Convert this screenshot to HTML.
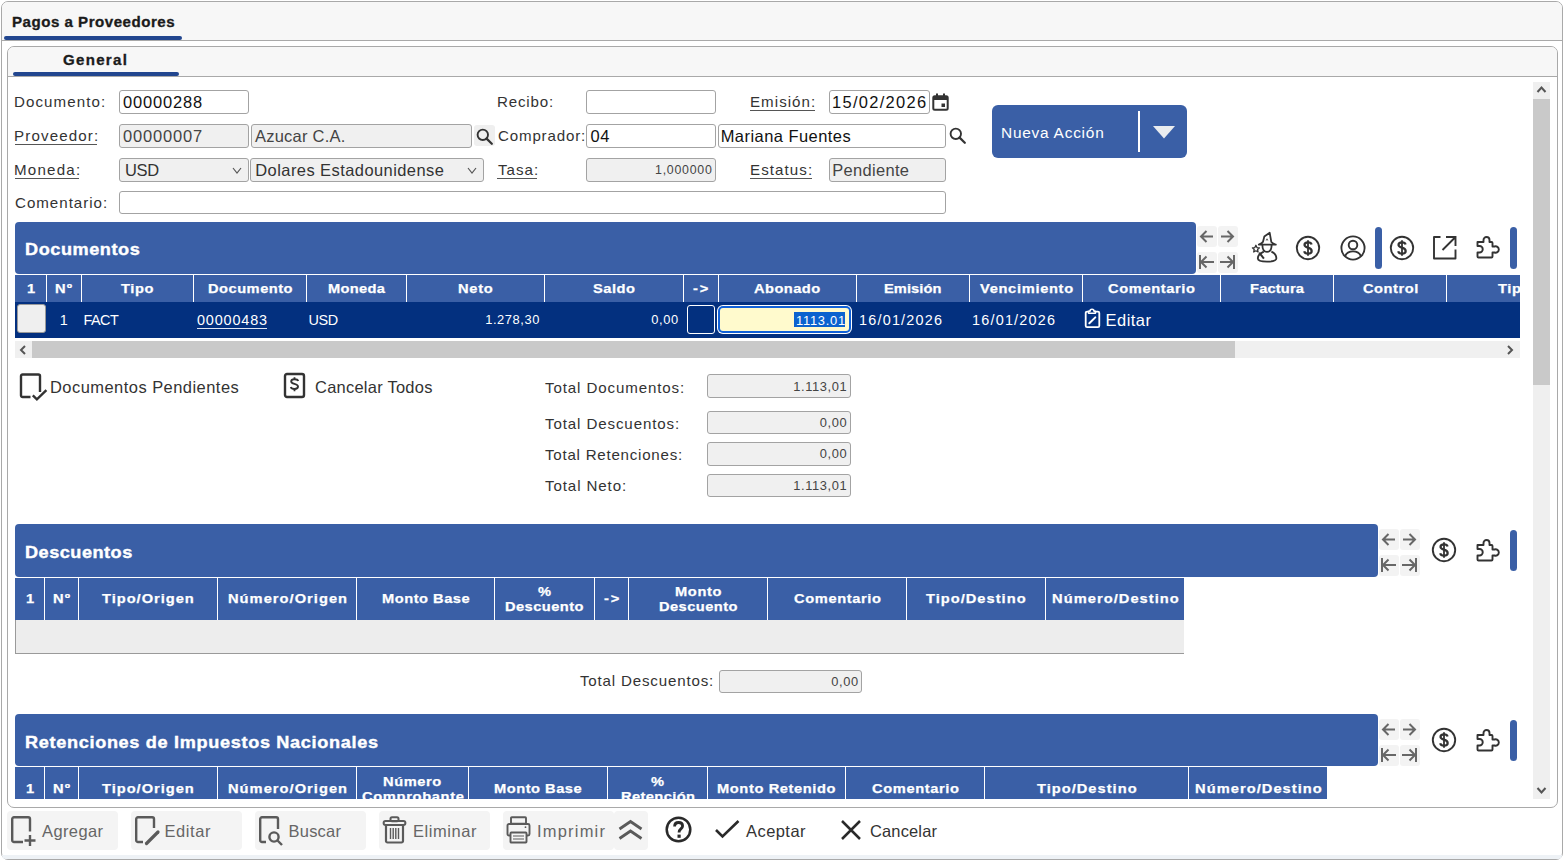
<!DOCTYPE html>
<html><head><meta charset="utf-8"><style>
html,body{margin:0;padding:0;}
body{width:1564px;height:861px;position:relative;overflow:hidden;background:#fff;font-family:"Liberation Sans",sans-serif;}
div,span,svg{box-sizing:border-box;}
</style></head><body>
<div style="position:absolute;left:1px;top:1px;width:1562px;height:859px;border:1px solid #a9a9a9;border-radius:7px;background:#fff;"></div>
<div style="position:absolute;left:2px;top:2px;width:1560px;height:38px;background:#f7f7f7;border-radius:6px 6px 0 0;"></div>
<div style="position:absolute;left:2px;top:40px;width:1560px;height:1px;background:#a9a9a9;"></div>
<div style="position:absolute;left:4px;top:36px;width:178px;height:4px;background:#22468f;border-radius:2px;"></div>
<span style="position:absolute;left:12.00px;top:16.00px;font-size:13.73px;line-height:1;font-weight:700;letter-spacing:0.460px;color:#1b1b1b;white-space:pre;transform:scaleX(1.1);transform-origin:0 0;-webkit-text-stroke:0.3px #1b1b1b;">Pagos a Proveedores</span>
<div style="position:absolute;left:2px;top:855px;width:1560px;height:4px;background:#eef2f6;border-radius:0 0 6px 6px;"></div>
<div style="position:absolute;left:7px;top:46px;width:1551px;height:762px;border:1px solid #a9a9a9;border-radius:7px;background:#fff;"></div>
<div style="position:absolute;left:8px;top:47px;width:1549px;height:29px;background:#f7f7f7;border-radius:6px 6px 0 0;"></div>
<div style="position:absolute;left:8px;top:76px;width:1549px;height:1px;background:#a9a9a9;"></div>
<div style="position:absolute;left:13px;top:72px;width:166px;height:4px;background:#22468f;border-radius:2px;"></div>
<span style="position:absolute;left:63.00px;top:54.00px;font-size:13.73px;line-height:1;font-weight:700;letter-spacing:1.166px;color:#1b1b1b;white-space:pre;transform:scaleX(1.1);transform-origin:0 0;-webkit-text-stroke:0.3px #1b1b1b;">General</span>
<span style="position:absolute;left:14.00px;top:94.00px;font-size:15.11px;line-height:1;letter-spacing:1.082px;color:#333;white-space:pre;">Documento:</span>
<span style="position:absolute;left:14.00px;top:128.00px;font-size:15.11px;line-height:1;letter-spacing:1.143px;color:#333;white-space:pre;">Proveedor:</span>
<div style="position:absolute;left:15px;top:144px;width:82px;height:1px;background:#555;"></div>
<span style="position:absolute;left:14.00px;top:162.00px;font-size:15.11px;line-height:1;letter-spacing:1.233px;color:#333;white-space:pre;">Moneda:</span>
<div style="position:absolute;left:15px;top:178px;width:64px;height:1px;background:#555;"></div>
<span style="position:absolute;left:15.00px;top:195.00px;font-size:15.11px;line-height:1;letter-spacing:0.990px;color:#333;white-space:pre;">Comentario:</span>
<span style="position:absolute;left:497.00px;top:94.00px;font-size:15.11px;line-height:1;letter-spacing:0.828px;color:#333;white-space:pre;">Recibo:</span>
<span style="position:absolute;left:498.00px;top:128.00px;font-size:15.11px;line-height:1;letter-spacing:0.825px;color:#333;white-space:pre;">Comprador:</span>
<span style="position:absolute;left:498.00px;top:162.00px;font-size:15.11px;line-height:1;letter-spacing:1.021px;color:#333;white-space:pre;">Tasa:</span>
<div style="position:absolute;left:497px;top:178px;width:40px;height:1px;background:#555;"></div>
<span style="position:absolute;left:750.00px;top:94.00px;font-size:15.11px;line-height:1;letter-spacing:1.037px;color:#333;white-space:pre;">Emisión:</span>
<div style="position:absolute;left:750px;top:110px;width:65px;height:1px;background:#555;"></div>
<span style="position:absolute;left:750.00px;top:162.00px;font-size:15.11px;line-height:1;letter-spacing:1.087px;color:#333;white-space:pre;">Estatus:</span>
<div style="position:absolute;left:750px;top:178px;width:62px;height:1px;background:#555;"></div>
<div style="position:absolute;left:119px;top:90px;width:130px;height:24px;border:1px solid #a3a3a3;border-radius:3px;background:#fff;"></div>
<span style="position:absolute;left:123.00px;top:94.00px;font-size:16.48px;line-height:1;letter-spacing:0.841px;color:#111;white-space:pre;">00000288</span>
<div style="position:absolute;left:119px;top:124px;width:130px;height:24px;border:1px solid #a3a3a3;border-radius:3px;background:#f0f0f0;"></div>
<span style="position:absolute;left:123.00px;top:128.00px;font-size:16.48px;line-height:1;letter-spacing:0.841px;color:#444;white-space:pre;">00000007</span>
<div style="position:absolute;left:251px;top:124px;width:221px;height:24px;border:1px solid #a3a3a3;border-radius:3px;background:#f0f0f0;"></div>
<span style="position:absolute;left:255.00px;top:128.00px;font-size:16.48px;line-height:1;letter-spacing:0.242px;color:#444;white-space:pre;">Azucar C.A.</span>
<div style="position:absolute;left:474px;top:125px;width:21px;height:21px;background:#efefef;border-radius:3px;"></div>
<div style="position:absolute;left:119px;top:158px;width:130px;height:24px;border:1px solid #a3a3a3;border-radius:3px;background:#f0f0f0;"></div>
<span style="position:absolute;left:125.00px;top:162.00px;font-size:16.48px;line-height:1;letter-spacing:-0.339px;color:#333;white-space:pre;">USD</span>
<div style="position:absolute;left:250px;top:158px;width:234px;height:24px;border:1px solid #a3a3a3;border-radius:3px;background:#f0f0f0;"></div>
<span style="position:absolute;left:255.30px;top:162.00px;font-size:16.48px;line-height:1;letter-spacing:0.434px;color:#333;white-space:pre;">Dolares Estadounidense</span>
<div style="position:absolute;left:119px;top:191px;width:827px;height:23px;border:1px solid #a3a3a3;border-radius:3px;background:#fff;"></div>
<div style="position:absolute;left:586px;top:90px;width:130px;height:24px;border:1px solid #a3a3a3;border-radius:3px;background:#fff;"></div>
<div style="position:absolute;left:586px;top:124px;width:130px;height:24px;border:1px solid #a3a3a3;border-radius:3px;background:#fff;"></div>
<span style="position:absolute;left:590.50px;top:128.00px;font-size:16.48px;line-height:1;letter-spacing:0.541px;color:#111;white-space:pre;">04</span>
<div style="position:absolute;left:718px;top:124px;width:228px;height:24px;border:1px solid #a3a3a3;border-radius:3px;background:#fff;"></div>
<span style="position:absolute;left:720.70px;top:128.00px;font-size:16.48px;line-height:1;letter-spacing:0.461px;color:#111;white-space:pre;">Mariana Fuentes</span>
<div style="position:absolute;left:586px;top:158px;width:130px;height:24px;border:1px solid #a3a3a3;border-radius:3px;background:#f0f0f0;"></div>
<span style="position:absolute;left:655.00px;top:164.00px;font-size:12.36px;line-height:1;letter-spacing:0.761px;color:#444;white-space:pre;">1,000000</span>
<div style="position:absolute;left:829px;top:90px;width:101px;height:24px;border:1px solid #a3a3a3;border-radius:3px;background:#fff;"></div>
<span style="position:absolute;left:832.00px;top:94.00px;font-size:16.48px;line-height:1;letter-spacing:1.304px;color:#111;white-space:pre;">15/02/2026</span>
<div style="position:absolute;left:829px;top:158px;width:117px;height:24px;border:1px solid #a3a3a3;border-radius:3px;background:#f0f0f0;"></div>
<span style="position:absolute;left:832.30px;top:162.00px;font-size:16.48px;line-height:1;letter-spacing:0.311px;color:#444;white-space:pre;">Pendiente</span>
<svg style="position:absolute;left:231.5px;top:166.5px;" width="10" height="7" viewBox="0 0 10 7"><polyline points="1,1 5.0,6 9,1" fill="none" stroke="#555" stroke-width="1.2"/></svg>
<svg style="position:absolute;left:466.5px;top:166.5px;" width="10" height="7" viewBox="0 0 10 7"><polyline points="1,1 5.0,6 9,1" fill="none" stroke="#555" stroke-width="1.2"/></svg>
<svg style="position:absolute;left:476px;top:128px;" width="17" height="17" viewBox="0 0 17 17"><circle cx="6.8" cy="6.8" r="5.2" fill="none" stroke="#333" stroke-width="1.9"/><line x1="10.6" y1="10.6" x2="15.8" y2="15.8" stroke="#333" stroke-width="2.2" stroke-linecap="round"/></svg>
<svg style="position:absolute;left:949px;top:127px;" width="17" height="17" viewBox="0 0 17 17"><circle cx="6.8" cy="6.8" r="5.2" fill="none" stroke="#333" stroke-width="1.9"/><line x1="10.6" y1="10.6" x2="15.8" y2="15.8" stroke="#333" stroke-width="2.2" stroke-linecap="round"/></svg>
<svg style="position:absolute;left:932px;top:93px;" width="17" height="18" viewBox="0 0 17 18"><rect x="1.3" y="3.3" width="14.4" height="13.4" rx="1.5" fill="none" stroke="#333" stroke-width="2"/><rect x="1" y="3" width="15" height="4" fill="#333"/><rect x="4" y="0.5" width="2" height="3" fill="#333"/><rect x="11" y="0.5" width="2" height="3" fill="#333"/><rect x="9.5" y="10.5" width="3.5" height="3.5" fill="#333"/></svg>
<div style="position:absolute;left:992px;top:105px;width:195px;height:53px;background:#3a5fa6;border-radius:6px;"></div>
<span style="position:absolute;left:1001.00px;top:125.00px;font-size:15.45px;line-height:1;letter-spacing:0.758px;color:#fff;white-space:pre;">Nueva Acción</span>
<div style="position:absolute;left:1138px;top:111px;width:2px;height:41px;background:#fff;"></div>
<svg style="position:absolute;left:1153px;top:126px;" width="22" height="13" viewBox="0 0 22 13"><polygon points="0,0 22,0 11,12.5" fill="#e9ecef"/></svg>
<div style="position:absolute;left:8px;top:77px;width:1525px;height:722px;overflow:hidden;">
<div style="position:absolute;left:-8px;top:-77px;width:1564px;height:861px;">
<div style="position:absolute;left:15px;top:222px;width:1181px;height:52px;background:#3a5fa6;border-radius:4px;"></div>
<span style="position:absolute;left:24.70px;top:241.00px;font-size:16.48px;line-height:1;font-weight:700;letter-spacing:0.512px;color:#fff;white-space:pre;transform:scaleX(1.1);transform-origin:0 0;-webkit-text-stroke:0.4px #fff;">Documentos</span>
<div style="position:absolute;left:15px;top:275px;width:1505px;height:63px;overflow:hidden;"><div style="position:absolute;left:-15px;top:-275px;width:1564px;height:861px;">
<div style="position:absolute;left:15px;top:275px;width:1544px;height:27px;background:#3a5fa6;"></div>
<div style="position:absolute;left:46px;top:275px;width:1px;height:27px;background:#fff;"></div>
<div style="position:absolute;left:81px;top:275px;width:1px;height:27px;background:#fff;"></div>
<div style="position:absolute;left:193px;top:275px;width:1px;height:27px;background:#fff;"></div>
<div style="position:absolute;left:306px;top:275px;width:1px;height:27px;background:#fff;"></div>
<div style="position:absolute;left:406px;top:275px;width:1px;height:27px;background:#fff;"></div>
<div style="position:absolute;left:544px;top:275px;width:1px;height:27px;background:#fff;"></div>
<div style="position:absolute;left:683px;top:275px;width:1px;height:27px;background:#fff;"></div>
<div style="position:absolute;left:718px;top:275px;width:1px;height:27px;background:#fff;"></div>
<div style="position:absolute;left:856px;top:275px;width:1px;height:27px;background:#fff;"></div>
<div style="position:absolute;left:969px;top:275px;width:1px;height:27px;background:#fff;"></div>
<div style="position:absolute;left:1082px;top:275px;width:1px;height:27px;background:#fff;"></div>
<div style="position:absolute;left:1220px;top:275px;width:1px;height:27px;background:#fff;"></div>
<div style="position:absolute;left:1333px;top:275px;width:1px;height:27px;background:#fff;"></div>
<div style="position:absolute;left:1446px;top:275px;width:1px;height:27px;background:#fff;"></div>
<span style="position:absolute;left:27.00px;top:282.00px;font-size:13.33px;line-height:1;font-weight:700;letter-spacing:0.000px;color:#fff;white-space:pre;transform:scaleX(1.1);transform-origin:0 0;-webkit-text-stroke:0.25px #fff;">1</span>
<span style="position:absolute;left:55.42px;top:282.00px;font-size:13.33px;line-height:1;font-weight:700;letter-spacing:0.970px;color:#fff;white-space:pre;transform:scaleX(1.1);transform-origin:0 0;-webkit-text-stroke:0.25px #fff;">Nº</span>
<span style="position:absolute;left:121.40px;top:282.00px;font-size:13.33px;line-height:1;font-weight:700;letter-spacing:0.509px;color:#fff;white-space:pre;transform:scaleX(1.1);transform-origin:0 0;-webkit-text-stroke:0.25px #fff;">Tipo</span>
<span style="position:absolute;left:207.80px;top:282.00px;font-size:13.33px;line-height:1;font-weight:700;letter-spacing:0.445px;color:#fff;white-space:pre;transform:scaleX(1.1);transform-origin:0 0;-webkit-text-stroke:0.25px #fff;">Documento</span>
<span style="position:absolute;left:327.76px;top:282.00px;font-size:13.33px;line-height:1;font-weight:700;letter-spacing:0.265px;color:#fff;white-space:pre;transform:scaleX(1.1);transform-origin:0 0;-webkit-text-stroke:0.25px #fff;">Moneda</span>
<span style="position:absolute;left:458.22px;top:282.00px;font-size:13.33px;line-height:1;font-weight:700;letter-spacing:0.649px;color:#fff;white-space:pre;transform:scaleX(1.1);transform-origin:0 0;-webkit-text-stroke:0.25px #fff;">Neto</span>
<span style="position:absolute;left:593.15px;top:282.00px;font-size:13.33px;line-height:1;font-weight:700;letter-spacing:0.441px;color:#fff;white-space:pre;transform:scaleX(1.1);transform-origin:0 0;-webkit-text-stroke:0.25px #fff;">Saldo</span>
<span style="position:absolute;left:693.23px;top:282.00px;font-size:13.33px;line-height:1;font-weight:700;letter-spacing:1.681px;color:#fff;white-space:pre;transform:scaleX(1.1);transform-origin:0 0;-webkit-text-stroke:0.25px #fff;">-&gt;</span>
<span style="position:absolute;left:754.48px;top:282.00px;font-size:13.33px;line-height:1;font-weight:700;letter-spacing:0.405px;color:#fff;white-space:pre;transform:scaleX(1.1);transform-origin:0 0;-webkit-text-stroke:0.25px #fff;">Abonado</span>
<span style="position:absolute;left:884.39px;top:282.00px;font-size:13.33px;line-height:1;font-weight:700;letter-spacing:0.053px;color:#fff;white-space:pre;transform:scaleX(1.1);transform-origin:0 0;-webkit-text-stroke:0.25px #fff;">Emisión</span>
<span style="position:absolute;left:979.53px;top:282.00px;font-size:13.33px;line-height:1;font-weight:700;letter-spacing:0.612px;color:#fff;white-space:pre;transform:scaleX(1.1);transform-origin:0 0;-webkit-text-stroke:0.25px #fff;">Vencimiento</span>
<span style="position:absolute;left:1108.07px;top:282.00px;font-size:13.33px;line-height:1;font-weight:700;letter-spacing:0.561px;color:#fff;white-space:pre;transform:scaleX(1.1);transform-origin:0 0;-webkit-text-stroke:0.25px #fff;">Comentario</span>
<span style="position:absolute;left:1249.67px;top:282.00px;font-size:13.33px;line-height:1;font-weight:700;letter-spacing:0.158px;color:#fff;white-space:pre;transform:scaleX(1.1);transform-origin:0 0;-webkit-text-stroke:0.25px #fff;">Factura</span>
<span style="position:absolute;left:1362.74px;top:282.00px;font-size:13.33px;line-height:1;font-weight:700;letter-spacing:0.483px;color:#fff;white-space:pre;transform:scaleX(1.1);transform-origin:0 0;-webkit-text-stroke:0.25px #fff;">Control</span>
<span style="position:absolute;left:1498.00px;top:282.00px;font-size:13.33px;line-height:1;font-weight:700;letter-spacing:0.509px;color:#fff;white-space:pre;transform:scaleX(1.1);transform-origin:0 0;-webkit-text-stroke:0.25px #fff;">Tipo</span>
<div style="position:absolute;left:15px;top:302px;width:1544px;height:36px;background:#03307f;"></div>
</div></div>
<div style="position:absolute;left:17px;top:304px;width:29px;height:29px;background:#efefef;border:1px solid #9a9a9a;border-radius:3px;"></div>
<span style="position:absolute;left:59.80px;top:313.00px;font-size:14.42px;line-height:1;letter-spacing:0.000px;color:#fff;white-space:pre;">1</span>
<span style="position:absolute;left:83.50px;top:313.00px;font-size:14.42px;line-height:1;letter-spacing:-0.506px;color:#fff;white-space:pre;">FACT</span>
<span style="position:absolute;left:197.00px;top:313.00px;font-size:14.42px;line-height:1;letter-spacing:0.845px;color:#fff;white-space:pre;">00000483</span>
<div style="position:absolute;left:197px;top:328px;width:70px;height:1px;background:#dfe6f3;"></div>
<span style="position:absolute;left:308.50px;top:313.00px;font-size:14.42px;line-height:1;letter-spacing:-0.439px;color:#fff;white-space:pre;">USD</span>
<span style="position:absolute;left:485.20px;top:314.00px;font-size:12.88px;line-height:1;letter-spacing:0.578px;color:#fff;white-space:pre;">1.278,30</span>
<span style="position:absolute;left:651.30px;top:314.00px;font-size:12.88px;line-height:1;letter-spacing:0.601px;color:#fff;white-space:pre;">0,00</span>
<div style="position:absolute;left:687px;top:305px;width:28px;height:29px;border:1px solid #fff;border-radius:3px;background:#03307f;"></div>
<div style="position:absolute;left:717px;top:305px;width:135px;height:29px;background:#fff;border-radius:6px;"></div>
<div style="position:absolute;left:718px;top:306px;width:133px;height:27px;background:#1060d8;border-radius:5px;"></div>
<div style="position:absolute;left:720px;top:308px;width:129px;height:23px;background:#fffacd;border-radius:3px;"></div>
<div style="position:absolute;left:794px;top:312px;width:51px;height:15px;background:#0b63cf;"></div>
<span style="position:absolute;left:796.00px;top:315.00px;font-size:12.88px;line-height:1;letter-spacing:0.755px;color:#fff;white-space:pre;">1113.01</span>
<span style="position:absolute;left:859.00px;top:313.00px;font-size:14.42px;line-height:1;letter-spacing:1.212px;color:#fff;white-space:pre;">16/01/2026</span>
<span style="position:absolute;left:972.00px;top:313.00px;font-size:14.42px;line-height:1;letter-spacing:1.212px;color:#fff;white-space:pre;">16/01/2026</span>
<svg style="position:absolute;left:1083px;top:307px;" width="18" height="22" viewBox="0 0 18 22"><rect x="2.7" y="4.6" width="13.6" height="15.6" rx="1.4" fill="none" stroke="#fff" stroke-width="1.8"/><path d="M5.6,6.2 H12.4 V4.2 H11 A2,2 0 0 0 7,4.2 H5.6 Z" fill="#03307f" stroke="#fff" stroke-width="1.6" stroke-linejoin="round"/><path d="M6.3,16.3 L12.3,10.4" stroke="#fff" stroke-width="2" stroke-linecap="round"/></svg>
<span style="position:absolute;left:1105.50px;top:312.00px;font-size:16.48px;line-height:1;letter-spacing:0.493px;color:#fff;white-space:pre;">Editar</span>
<div style="position:absolute;left:15px;top:341px;width:1505px;height:17px;background:#f0f0f0;"></div>
<div style="position:absolute;left:32px;top:341px;width:1203px;height:17px;background:#c9c9c9;"></div>
<svg style="position:absolute;left:19px;top:345px;" width="8" height="10" viewBox="0 0 8 10"><polyline points="6,1 2,5 6,9" fill="none" stroke="#555" stroke-width="2"/></svg>
<svg style="position:absolute;left:1506px;top:345px;" width="8" height="10" viewBox="0 0 8 10"><polyline points="2,1 6,5 2,9" fill="none" stroke="#555" stroke-width="2"/></svg>
<div style="position:absolute;left:1197px;top:226px;width:20px;height:21px;background:#f3f3f3;border-radius:3px;"></div>
<div style="position:absolute;left:1197px;top:252px;width:20px;height:21px;background:#f3f3f3;border-radius:3px;"></div>
<div style="position:absolute;left:1218px;top:226px;width:20px;height:21px;background:#f3f3f3;border-radius:3px;"></div>
<div style="position:absolute;left:1218px;top:252px;width:20px;height:21px;background:#f3f3f3;border-radius:3px;"></div>
<svg style="position:absolute;left:1199px;top:229px;" width="15" height="15" viewBox="0 0 15 15"><path d="M14,7.5 H2 M7.5,2 L2,7.5 L7.5,13" fill="none" stroke="#676767" stroke-width="2"/></svg>
<svg style="position:absolute;left:1220px;top:229px;" width="15" height="15" viewBox="0 0 15 15"><path d="M1,7.5 H13 M7.5,2 L13,7.5 L7.5,13" fill="none" stroke="#676767" stroke-width="2"/></svg>
<svg style="position:absolute;left:1198px;top:254px;" width="17" height="16" viewBox="0 0 17 16"><path d="M2,1 V15 M16,8 H3 M8.5,2.5 L3,8 L8.5,13.5" fill="none" stroke="#676767" stroke-width="2"/></svg>
<svg style="position:absolute;left:1219px;top:254px;" width="17" height="16" viewBox="0 0 17 16"><path d="M15,1 V15 M1,8 H14 M8.5,2.5 L14,8 L8.5,13.5" fill="none" stroke="#676767" stroke-width="2"/></svg>
<svg style="position:absolute;left:1250px;top:231px;" width="29" height="33" viewBox="0 0 29 33">
<path d="M8.8,13.6 C10.5,12.9 12.2,12.2 13,10.8 L14.3,5.6 L19.7,1.8 L21.3,10.8 C22,12.2 24,12.9 25.8,13.6 Z" fill="none" stroke="#333" stroke-width="1.8" stroke-linejoin="round"/>
<path d="M16.2,9.5 L17,7.8 L17.8,9.5" fill="none" stroke="#555" stroke-width="1"/>
<path d="M12.4,14 C12.4,18.6 14.2,20.9 17,20.9 C19.8,20.9 21.6,18.6 21.6,14" fill="none" stroke="#333" stroke-width="1.8"/>
<path d="M13.8,20.6 C10.2,22.2 7.8,24.6 7.8,27.2 C7.8,29.6 12,30.6 17,30.6 C22,30.6 26.4,29.6 26.4,27.2 C26.4,24.6 24.4,22 21.4,20.6" fill="none" stroke="#333" stroke-width="1.8"/>
<path d="M9.2,21.6 L13.9,27.6" stroke="#333" stroke-width="2"/>
<polygon points="5.90,14.30 6.96,16.54 9.42,16.86 7.61,18.56 8.07,20.99 5.90,19.80 3.73,20.99 4.19,18.56 2.38,16.86 4.84,16.54" fill="none" stroke="#333" stroke-width="1.3" stroke-linejoin="round"/>
</svg>
<svg style="position:absolute;left:1295.4px;top:234.7px;" width="26" height="26" viewBox="0 0 26 26"><circle cx="13" cy="13" r="11.2" fill="none" stroke="#333" stroke-width="1.9"/><path d="M16.6,9.6 C16.2,7.9 14.6,7.4 13,7.4 C11,7.4 9.5,8.4 9.5,10 C9.5,13.3 16.7,12 16.7,15.9 C16.7,17.6 15,18.6 13,18.6 C11,18.6 9.6,17.8 9.2,16.2" fill="none" stroke="#333" stroke-width="2.2"/><path d="M13,5.2 V20.8" stroke="#333" stroke-width="1.8"/></svg>
<svg style="position:absolute;left:1339px;top:234px;" width="28" height="28" viewBox="0 0 28 28"><circle cx="14" cy="14" r="11.6" fill="none" stroke="#333" stroke-width="1.9"/><circle cx="14" cy="11" r="4.3" fill="none" stroke="#333" stroke-width="1.9"/><path d="M6,22.2 C7.5,18.8 10.5,17.4 14,17.4 C17.5,17.4 20.5,18.8 22,22.2" fill="none" stroke="#333" stroke-width="1.9"/></svg>
<div style="position:absolute;left:1375px;top:227px;width:6.5px;height:42px;background:#3a5fa6;border-radius:3.5px;"></div>
<svg style="position:absolute;left:1389.4px;top:234.7px;" width="26" height="26" viewBox="0 0 26 26"><circle cx="13" cy="13" r="11.2" fill="none" stroke="#333" stroke-width="1.9"/><path d="M16.6,9.6 C16.2,7.9 14.6,7.4 13,7.4 C11,7.4 9.5,8.4 9.5,10 C9.5,13.3 16.7,12 16.7,15.9 C16.7,17.6 15,18.6 13,18.6 C11,18.6 9.6,17.8 9.2,16.2" fill="none" stroke="#333" stroke-width="2.2"/><path d="M13,5.2 V20.8" stroke="#333" stroke-width="1.8"/></svg>
<svg style="position:absolute;left:1431px;top:234px;" width="28" height="28" viewBox="0 0 28 28"><path d="M9.5,3 H3 V24.5 H24.5 V15.5" fill="none" stroke="#333" stroke-width="1.9" stroke-linejoin="round"/><path d="M11.5,16 L24,3.5 M15,3 H24.5 V12" fill="none" stroke="#333" stroke-width="1.9"/></svg>
<svg style="position:absolute;left:1475px;top:234px;" width="26" height="26" viewBox="0 0 26 26"><path d="M2.5,8 H8.5 V6 A3,3 0 1 1 14.5,6 V8 H16.5 A1,1 0 0 1 17.5,9 V12.5 H19.5 A3.2,3.2 0 1 1 19.5,18.5 H17.5 V22.5 A1,1 0 0 1 16.5,23.5 H3.5 A1,1 0 0 1 2.5,22.5 V18.5 H4.5 A3.2,3.2 0 1 0 4.5,12 H2.5 Z" fill="none" stroke="#333" stroke-width="1.9" stroke-linejoin="round"/></svg>
<div style="position:absolute;left:1510px;top:227px;width:6.5px;height:42px;background:#3a5fa6;border-radius:3.5px;"></div>
<svg style="position:absolute;left:19px;top:372px;" width="29" height="30" viewBox="0 0 29 30"><path d="M11.5,25 H3.6 A1.6,1.6 0 0 1 2,23.4 V4.1 A1.6,1.6 0 0 1 3.6,2.5 H19.4 A1.6,1.6 0 0 1 21,4.1 V20" fill="none" stroke="#333" stroke-width="2.4" stroke-linejoin="round"/><polyline points="13.8,23.3 17.9,27.3 27.4,18.2" fill="none" stroke="#333" stroke-width="2.4"/></svg>
<span style="position:absolute;left:50.00px;top:379.00px;font-size:16.48px;line-height:1;letter-spacing:0.465px;color:#333;white-space:pre;">Documentos Pendientes</span>
<svg style="position:absolute;left:283px;top:372px;" width="23" height="27" viewBox="0 0 23 27"><rect x="2" y="2" width="19" height="23" rx="2" fill="none" stroke="#333" stroke-width="2.4"/><path d="M15.2,9 C14.8,7.6 13.6,7.2 11.5,7.2 C9.6,7.2 8.2,8 8.2,9.5 C8.2,12.6 15,11.2 15,14.6 C15,16.2 13.6,17 11.5,17 C9.6,17 8.2,16.4 7.8,15" fill="none" stroke="#333" stroke-width="1.9"/><path d="M11.5,5.2 V7.3 M11.5,16.9 V19.2" stroke="#333" stroke-width="1.8"/></svg>
<span style="position:absolute;left:315.00px;top:379.00px;font-size:16.48px;line-height:1;letter-spacing:0.254px;color:#333;white-space:pre;">Cancelar Todos</span>
<span style="position:absolute;left:545.00px;top:380.00px;font-size:15.11px;line-height:1;letter-spacing:0.879px;color:#333;white-space:pre;">Total Documentos:</span>
<div style="position:absolute;left:707px;top:374px;width:144px;height:24px;border:1px solid #a3a3a3;border-radius:3px;background:#f0f0f0;"></div>
<span style="position:absolute;left:793.20px;top:381.00px;font-size:12.88px;line-height:1;letter-spacing:0.614px;color:#444;white-space:pre;">1.113,01</span>
<span style="position:absolute;left:545.00px;top:416.00px;font-size:15.11px;line-height:1;letter-spacing:0.881px;color:#333;white-space:pre;">Total Descuentos:</span>
<div style="position:absolute;left:707px;top:411px;width:144px;height:23px;border:1px solid #a3a3a3;border-radius:3px;background:#f0f0f0;"></div>
<span style="position:absolute;left:819.80px;top:417.00px;font-size:12.88px;line-height:1;letter-spacing:0.601px;color:#444;white-space:pre;">0,00</span>
<span style="position:absolute;left:545.00px;top:447.00px;font-size:15.11px;line-height:1;letter-spacing:0.758px;color:#333;white-space:pre;">Total Retenciones:</span>
<div style="position:absolute;left:707px;top:442px;width:144px;height:24px;border:1px solid #a3a3a3;border-radius:3px;background:#f0f0f0;"></div>
<span style="position:absolute;left:819.80px;top:448.00px;font-size:12.88px;line-height:1;letter-spacing:0.601px;color:#444;white-space:pre;">0,00</span>
<span style="position:absolute;left:545.00px;top:478.00px;font-size:15.11px;line-height:1;letter-spacing:0.897px;color:#333;white-space:pre;">Total Neto:</span>
<div style="position:absolute;left:707px;top:474px;width:144px;height:23px;border:1px solid #a3a3a3;border-radius:3px;background:#f0f0f0;"></div>
<span style="position:absolute;left:793.20px;top:480.00px;font-size:12.88px;line-height:1;letter-spacing:0.614px;color:#444;white-space:pre;">1.113,01</span>
<div style="position:absolute;left:15px;top:524px;width:1363px;height:53px;background:#3a5fa6;border-radius:4px;"></div>
<span style="position:absolute;left:24.70px;top:544.00px;font-size:16.48px;line-height:1;font-weight:700;letter-spacing:0.463px;color:#fff;white-space:pre;transform:scaleX(1.1);transform-origin:0 0;-webkit-text-stroke:0.4px #fff;">Descuentos</span>
<div style="position:absolute;left:15px;top:578px;width:1169px;height:42px;background:#3a5fa6;"></div>
<div style="position:absolute;left:44px;top:578px;width:1px;height:42px;background:#fff;"></div>
<div style="position:absolute;left:78px;top:578px;width:1px;height:42px;background:#fff;"></div>
<div style="position:absolute;left:217px;top:578px;width:1px;height:42px;background:#fff;"></div>
<div style="position:absolute;left:356px;top:578px;width:1px;height:42px;background:#fff;"></div>
<div style="position:absolute;left:494px;top:578px;width:1px;height:42px;background:#fff;"></div>
<div style="position:absolute;left:594px;top:578px;width:1px;height:42px;background:#fff;"></div>
<div style="position:absolute;left:628px;top:578px;width:1px;height:42px;background:#fff;"></div>
<div style="position:absolute;left:767px;top:578px;width:1px;height:42px;background:#fff;"></div>
<div style="position:absolute;left:906px;top:578px;width:1px;height:42px;background:#fff;"></div>
<div style="position:absolute;left:1045px;top:578px;width:1px;height:42px;background:#fff;"></div>
<span style="position:absolute;left:26.00px;top:592.00px;font-size:13.33px;line-height:1;font-weight:700;letter-spacing:0.000px;color:#fff;white-space:pre;transform:scaleX(1.1);transform-origin:0 0;-webkit-text-stroke:0.25px #fff;">1</span>
<span style="position:absolute;left:52.92px;top:592.00px;font-size:13.33px;line-height:1;font-weight:700;letter-spacing:0.970px;color:#fff;white-space:pre;transform:scaleX(1.1);transform-origin:0 0;-webkit-text-stroke:0.25px #fff;">Nº</span>
<span style="position:absolute;left:102.18px;top:592.00px;font-size:13.33px;line-height:1;font-weight:700;letter-spacing:0.891px;color:#fff;white-space:pre;transform:scaleX(1.1);transform-origin:0 0;-webkit-text-stroke:0.25px #fff;">Tipo/Origen</span>
<span style="position:absolute;left:227.56px;top:592.00px;font-size:13.33px;line-height:1;font-weight:700;letter-spacing:0.933px;color:#fff;white-space:pre;transform:scaleX(1.1);transform-origin:0 0;-webkit-text-stroke:0.25px #fff;">Número/Origen</span>
<span style="position:absolute;left:381.92px;top:592.00px;font-size:13.33px;line-height:1;font-weight:700;letter-spacing:0.458px;color:#fff;white-space:pre;transform:scaleX(1.1);transform-origin:0 0;-webkit-text-stroke:0.25px #fff;">Monto Base</span>
<span style="position:absolute;left:538.00px;top:585.00px;font-size:13.33px;line-height:1;font-weight:700;letter-spacing:0.000px;color:#fff;white-space:pre;transform:scaleX(1.1);transform-origin:0 0;-webkit-text-stroke:0.25px #fff;">%</span>
<span style="position:absolute;left:505.34px;top:600.00px;font-size:13.33px;line-height:1;font-weight:700;letter-spacing:0.401px;color:#fff;white-space:pre;transform:scaleX(1.1);transform-origin:0 0;-webkit-text-stroke:0.25px #fff;">Descuento</span>
<span style="position:absolute;left:603.73px;top:592.00px;font-size:13.33px;line-height:1;font-weight:700;letter-spacing:1.681px;color:#fff;white-space:pre;transform:scaleX(1.1);transform-origin:0 0;-webkit-text-stroke:0.25px #fff;">-&gt;</span>
<span style="position:absolute;left:674.86px;top:585.00px;font-size:13.33px;line-height:1;font-weight:700;letter-spacing:0.562px;color:#fff;white-space:pre;transform:scaleX(1.1);transform-origin:0 0;-webkit-text-stroke:0.25px #fff;">Monto</span>
<span style="position:absolute;left:658.84px;top:600.00px;font-size:13.33px;line-height:1;font-weight:700;letter-spacing:0.401px;color:#fff;white-space:pre;transform:scaleX(1.1);transform-origin:0 0;-webkit-text-stroke:0.25px #fff;">Descuento</span>
<span style="position:absolute;left:793.57px;top:592.00px;font-size:13.33px;line-height:1;font-weight:700;letter-spacing:0.561px;color:#fff;white-space:pre;transform:scaleX(1.1);transform-origin:0 0;-webkit-text-stroke:0.25px #fff;">Comentario</span>
<span style="position:absolute;left:926.29px;top:592.00px;font-size:13.33px;line-height:1;font-weight:700;letter-spacing:0.915px;color:#fff;white-space:pre;transform:scaleX(1.1);transform-origin:0 0;-webkit-text-stroke:0.25px #fff;">Tipo/Destino</span>
<span style="position:absolute;left:1051.67px;top:592.00px;font-size:13.33px;line-height:1;font-weight:700;letter-spacing:0.950px;color:#fff;white-space:pre;transform:scaleX(1.1);transform-origin:0 0;-webkit-text-stroke:0.25px #fff;">Número/Destino</span>
<div style="position:absolute;left:15px;top:620px;width:1169px;height:34px;background:#ededed;border-left:1px solid #9a9a9a;border-bottom:1px solid #9a9a9a;"></div>
<div style="position:absolute;left:1379px;top:529px;width:20px;height:21px;background:#f3f3f3;border-radius:3px;"></div>
<div style="position:absolute;left:1379px;top:555px;width:20px;height:21px;background:#f3f3f3;border-radius:3px;"></div>
<div style="position:absolute;left:1400px;top:529px;width:20px;height:21px;background:#f3f3f3;border-radius:3px;"></div>
<div style="position:absolute;left:1400px;top:555px;width:20px;height:21px;background:#f3f3f3;border-radius:3px;"></div>
<svg style="position:absolute;left:1381px;top:532px;" width="15" height="15" viewBox="0 0 15 15"><path d="M14,7.5 H2 M7.5,2 L2,7.5 L7.5,13" fill="none" stroke="#676767" stroke-width="2"/></svg>
<svg style="position:absolute;left:1402px;top:532px;" width="15" height="15" viewBox="0 0 15 15"><path d="M1,7.5 H13 M7.5,2 L13,7.5 L7.5,13" fill="none" stroke="#676767" stroke-width="2"/></svg>
<svg style="position:absolute;left:1380px;top:557px;" width="17" height="16" viewBox="0 0 17 16"><path d="M2,1 V15 M16,8 H3 M8.5,2.5 L3,8 L8.5,13.5" fill="none" stroke="#676767" stroke-width="2"/></svg>
<svg style="position:absolute;left:1401px;top:557px;" width="17" height="16" viewBox="0 0 17 16"><path d="M15,1 V15 M1,8 H14 M8.5,2.5 L14,8 L8.5,13.5" fill="none" stroke="#676767" stroke-width="2"/></svg>
<svg style="position:absolute;left:1431.4px;top:537.2px;" width="26" height="26" viewBox="0 0 26 26"><circle cx="13" cy="13" r="11.2" fill="none" stroke="#333" stroke-width="1.9"/><path d="M16.6,9.6 C16.2,7.9 14.6,7.4 13,7.4 C11,7.4 9.5,8.4 9.5,10 C9.5,13.3 16.7,12 16.7,15.9 C16.7,17.6 15,18.6 13,18.6 C11,18.6 9.6,17.8 9.2,16.2" fill="none" stroke="#333" stroke-width="2.2"/><path d="M13,5.2 V20.8" stroke="#333" stroke-width="1.8"/></svg>
<svg style="position:absolute;left:1475px;top:537px;" width="26" height="26" viewBox="0 0 26 26"><path d="M2.5,8 H8.5 V6 A3,3 0 1 1 14.5,6 V8 H16.5 A1,1 0 0 1 17.5,9 V12.5 H19.5 A3.2,3.2 0 1 1 19.5,18.5 H17.5 V22.5 A1,1 0 0 1 16.5,23.5 H3.5 A1,1 0 0 1 2.5,22.5 V18.5 H4.5 A3.2,3.2 0 1 0 4.5,12 H2.5 Z" fill="none" stroke="#333" stroke-width="1.9" stroke-linejoin="round"/></svg>
<div style="position:absolute;left:1510px;top:530px;width:6.5px;height:41px;background:#3a5fa6;border-radius:3.5px;"></div>
<span style="position:absolute;left:580.00px;top:673.00px;font-size:15.11px;line-height:1;letter-spacing:0.819px;color:#333;white-space:pre;">Total Descuentos:</span>
<div style="position:absolute;left:719px;top:670px;width:143px;height:23px;border:1px solid #a3a3a3;border-radius:3px;background:#f0f0f0;"></div>
<span style="position:absolute;left:831.30px;top:676.00px;font-size:12.88px;line-height:1;letter-spacing:0.601px;color:#444;white-space:pre;">0,00</span>
<div style="position:absolute;left:15px;top:714px;width:1363px;height:52px;background:#3a5fa6;border-radius:4px;"></div>
<span style="position:absolute;left:24.70px;top:734.00px;font-size:16.48px;line-height:1;font-weight:700;letter-spacing:0.611px;color:#fff;white-space:pre;transform:scaleX(1.1);transform-origin:0 0;-webkit-text-stroke:0.4px #fff;">Retenciones de Impuestos Nacionales</span>
<div style="position:absolute;left:15px;top:767px;width:1312px;height:42px;background:#3a5fa6;"></div>
<div style="position:absolute;left:44px;top:767px;width:1px;height:42px;background:#fff;"></div>
<div style="position:absolute;left:78px;top:767px;width:1px;height:42px;background:#fff;"></div>
<div style="position:absolute;left:217px;top:767px;width:1px;height:42px;background:#fff;"></div>
<div style="position:absolute;left:356px;top:767px;width:1px;height:42px;background:#fff;"></div>
<div style="position:absolute;left:468px;top:767px;width:1px;height:42px;background:#fff;"></div>
<div style="position:absolute;left:607px;top:767px;width:1px;height:42px;background:#fff;"></div>
<div style="position:absolute;left:707px;top:767px;width:1px;height:42px;background:#fff;"></div>
<div style="position:absolute;left:845px;top:767px;width:1px;height:42px;background:#fff;"></div>
<div style="position:absolute;left:984px;top:767px;width:1px;height:42px;background:#fff;"></div>
<div style="position:absolute;left:1188px;top:767px;width:1px;height:42px;background:#fff;"></div>
<span style="position:absolute;left:26.00px;top:782.00px;font-size:13.33px;line-height:1;font-weight:700;letter-spacing:0.000px;color:#fff;white-space:pre;transform:scaleX(1.1);transform-origin:0 0;-webkit-text-stroke:0.25px #fff;">1</span>
<span style="position:absolute;left:52.92px;top:782.00px;font-size:13.33px;line-height:1;font-weight:700;letter-spacing:0.970px;color:#fff;white-space:pre;transform:scaleX(1.1);transform-origin:0 0;-webkit-text-stroke:0.25px #fff;">Nº</span>
<span style="position:absolute;left:102.18px;top:782.00px;font-size:13.33px;line-height:1;font-weight:700;letter-spacing:0.891px;color:#fff;white-space:pre;transform:scaleX(1.1);transform-origin:0 0;-webkit-text-stroke:0.25px #fff;">Tipo/Origen</span>
<span style="position:absolute;left:227.56px;top:782.00px;font-size:13.33px;line-height:1;font-weight:700;letter-spacing:0.933px;color:#fff;white-space:pre;transform:scaleX(1.1);transform-origin:0 0;-webkit-text-stroke:0.25px #fff;">Número/Origen</span>
<span style="position:absolute;left:383.43px;top:775.00px;font-size:13.33px;line-height:1;font-weight:700;letter-spacing:0.528px;color:#fff;white-space:pre;transform:scaleX(1.1);transform-origin:0 0;-webkit-text-stroke:0.25px #fff;">Número</span>
<span style="position:absolute;left:361.76px;top:790.00px;font-size:13.33px;line-height:1;font-weight:700;letter-spacing:0.604px;color:#fff;white-space:pre;transform:scaleX(1.1);transform-origin:0 0;-webkit-text-stroke:0.25px #fff;">Comprobante</span>
<span style="position:absolute;left:494.42px;top:782.00px;font-size:13.33px;line-height:1;font-weight:700;letter-spacing:0.458px;color:#fff;white-space:pre;transform:scaleX(1.1);transform-origin:0 0;-webkit-text-stroke:0.25px #fff;">Monto Base</span>
<span style="position:absolute;left:651.00px;top:775.00px;font-size:13.33px;line-height:1;font-weight:700;letter-spacing:0.000px;color:#fff;white-space:pre;transform:scaleX(1.1);transform-origin:0 0;-webkit-text-stroke:0.25px #fff;">%</span>
<span style="position:absolute;left:620.59px;top:790.00px;font-size:13.33px;line-height:1;font-weight:700;letter-spacing:0.354px;color:#fff;white-space:pre;transform:scaleX(1.1);transform-origin:0 0;-webkit-text-stroke:0.25px #fff;">Retención</span>
<span style="position:absolute;left:717.31px;top:782.00px;font-size:13.33px;line-height:1;font-weight:700;letter-spacing:0.545px;color:#fff;white-space:pre;transform:scaleX(1.1);transform-origin:0 0;-webkit-text-stroke:0.25px #fff;">Monto Retenido</span>
<span style="position:absolute;left:871.57px;top:782.00px;font-size:13.33px;line-height:1;font-weight:700;letter-spacing:0.561px;color:#fff;white-space:pre;transform:scaleX(1.1);transform-origin:0 0;-webkit-text-stroke:0.25px #fff;">Comentario</span>
<span style="position:absolute;left:1036.79px;top:782.00px;font-size:13.33px;line-height:1;font-weight:700;letter-spacing:0.915px;color:#fff;white-space:pre;transform:scaleX(1.1);transform-origin:0 0;-webkit-text-stroke:0.25px #fff;">Tipo/Destino</span>
<span style="position:absolute;left:1194.67px;top:782.00px;font-size:13.33px;line-height:1;font-weight:700;letter-spacing:0.950px;color:#fff;white-space:pre;transform:scaleX(1.1);transform-origin:0 0;-webkit-text-stroke:0.25px #fff;">Número/Destino</span>
<div style="position:absolute;left:1379px;top:719px;width:20px;height:21px;background:#f3f3f3;border-radius:3px;"></div>
<div style="position:absolute;left:1379px;top:745px;width:20px;height:21px;background:#f3f3f3;border-radius:3px;"></div>
<div style="position:absolute;left:1400px;top:719px;width:20px;height:21px;background:#f3f3f3;border-radius:3px;"></div>
<div style="position:absolute;left:1400px;top:745px;width:20px;height:21px;background:#f3f3f3;border-radius:3px;"></div>
<svg style="position:absolute;left:1381px;top:722px;" width="15" height="15" viewBox="0 0 15 15"><path d="M14,7.5 H2 M7.5,2 L2,7.5 L7.5,13" fill="none" stroke="#676767" stroke-width="2"/></svg>
<svg style="position:absolute;left:1402px;top:722px;" width="15" height="15" viewBox="0 0 15 15"><path d="M1,7.5 H13 M7.5,2 L13,7.5 L7.5,13" fill="none" stroke="#676767" stroke-width="2"/></svg>
<svg style="position:absolute;left:1380px;top:747px;" width="17" height="16" viewBox="0 0 17 16"><path d="M2,1 V15 M16,8 H3 M8.5,2.5 L3,8 L8.5,13.5" fill="none" stroke="#676767" stroke-width="2"/></svg>
<svg style="position:absolute;left:1401px;top:747px;" width="17" height="16" viewBox="0 0 17 16"><path d="M15,1 V15 M1,8 H14 M8.5,2.5 L14,8 L8.5,13.5" fill="none" stroke="#676767" stroke-width="2"/></svg>
<svg style="position:absolute;left:1431.4px;top:727.2px;" width="26" height="26" viewBox="0 0 26 26"><circle cx="13" cy="13" r="11.2" fill="none" stroke="#333" stroke-width="1.9"/><path d="M16.6,9.6 C16.2,7.9 14.6,7.4 13,7.4 C11,7.4 9.5,8.4 9.5,10 C9.5,13.3 16.7,12 16.7,15.9 C16.7,17.6 15,18.6 13,18.6 C11,18.6 9.6,17.8 9.2,16.2" fill="none" stroke="#333" stroke-width="2.2"/><path d="M13,5.2 V20.8" stroke="#333" stroke-width="1.8"/></svg>
<svg style="position:absolute;left:1475px;top:727px;" width="26" height="26" viewBox="0 0 26 26"><path d="M2.5,8 H8.5 V6 A3,3 0 1 1 14.5,6 V8 H16.5 A1,1 0 0 1 17.5,9 V12.5 H19.5 A3.2,3.2 0 1 1 19.5,18.5 H17.5 V22.5 A1,1 0 0 1 16.5,23.5 H3.5 A1,1 0 0 1 2.5,22.5 V18.5 H4.5 A3.2,3.2 0 1 0 4.5,12 H2.5 Z" fill="none" stroke="#333" stroke-width="1.9" stroke-linejoin="round"/></svg>
<div style="position:absolute;left:1510px;top:720px;width:6.5px;height:41px;background:#3a5fa6;border-radius:3.5px;"></div>
</div></div>
<div style="position:absolute;left:1533px;top:82px;width:17px;height:717px;background:#efefef;"></div>
<div style="position:absolute;left:1533px;top:99px;width:17px;height:286px;background:#c9c9c9;"></div>
<svg style="position:absolute;left:1536px;top:85px;" width="11" height="9" viewBox="0 0 11 9"><polyline points="1.5,7 5.5,2.5 9.5,7" fill="none" stroke="#555" stroke-width="2"/></svg>
<svg style="position:absolute;left:1536px;top:786px;" width="11" height="9" viewBox="0 0 11 9"><polyline points="1.5,2 5.5,6.5 9.5,2" fill="none" stroke="#555" stroke-width="2"/></svg>
<div style="position:absolute;left:7px;top:811px;width:111px;height:39px;background:#f4f4f4;border-radius:4px;"></div>
<div style="position:absolute;left:131px;top:811px;width:111px;height:39px;background:#f4f4f4;border-radius:4px;"></div>
<div style="position:absolute;left:255px;top:811px;width:111px;height:39px;background:#f4f4f4;border-radius:4px;"></div>
<div style="position:absolute;left:379px;top:811px;width:111px;height:39px;background:#f4f4f4;border-radius:4px;"></div>
<div style="position:absolute;left:503px;top:811px;width:111px;height:39px;background:#f4f4f4;border-radius:4px;"></div>
<div style="position:absolute;left:614px;top:811px;width:34px;height:39px;background:#f4f4f4;border-radius:4px;"></div>
<svg style="position:absolute;left:10px;top:815px;" width="27" height="32" viewBox="0 0 27 32"><path d="M13,27 H4 A1.8,1.8 0 0 1 2.2,25.2 V4 A1.8,1.8 0 0 1 4,2.2 H18.2 A1.8,1.8 0 0 1 20,4 V16.5" fill="none" stroke="#5a5a5a" stroke-width="2.4"/><path d="M20,20 V31 M14.5,25.5 H25.5" stroke="#5a5a5a" stroke-width="2.4"/></svg>
<span style="position:absolute;left:42.00px;top:823.00px;font-size:16.48px;line-height:1;letter-spacing:0.399px;color:#666;white-space:pre;">Agregar</span>
<svg style="position:absolute;left:134px;top:815px;" width="27" height="32" viewBox="0 0 27 32"><path d="M9,27 H4 A1.8,1.8 0 0 1 2.2,25.2 V4 A1.8,1.8 0 0 1 4,2.2 H18.2 A1.8,1.8 0 0 1 20,4 V13" fill="none" stroke="#5a5a5a" stroke-width="2.4"/><path d="M12.5,28.5 L24,17" stroke="#5a5a5a" stroke-width="3.2" stroke-linecap="round"/></svg>
<span style="position:absolute;left:164.50px;top:823.00px;font-size:16.48px;line-height:1;letter-spacing:0.593px;color:#666;white-space:pre;">Editar</span>
<svg style="position:absolute;left:258px;top:815px;" width="27" height="32" viewBox="0 0 27 32"><path d="M8,27 H4 A1.8,1.8 0 0 1 2.2,25.2 V4 A1.8,1.8 0 0 1 4,2.2 H18.2 A1.8,1.8 0 0 1 20,4 V14" fill="none" stroke="#5a5a5a" stroke-width="2.4"/><circle cx="16" cy="22" r="4.6" fill="none" stroke="#5a5a5a" stroke-width="2.4"/><path d="M19.5,25.5 L24,30" stroke="#5a5a5a" stroke-width="2.4"/></svg>
<span style="position:absolute;left:288.50px;top:823.00px;font-size:16.48px;line-height:1;letter-spacing:0.246px;color:#666;white-space:pre;">Buscar</span>
<svg style="position:absolute;left:382px;top:816px;" width="25" height="28" viewBox="0 0 25 28"><rect x="8.5" y="1.2" width="8" height="4" rx="1.5" fill="none" stroke="#5a5a5a" stroke-width="2"/><rect x="1.6" y="5" width="21.8" height="4" rx="2" fill="none" stroke="#5a5a5a" stroke-width="2"/><path d="M4,9 V25 A1.5,1.5 0 0 0 5.5,26.5 H19.5 A1.5,1.5 0 0 0 21,25 V9" fill="none" stroke="#5a5a5a" stroke-width="2.2"/><path d="M8.5,12 V23 M11.2,12 V23 M13.8,12 V23 M16.5,12 V23" stroke="#5a5a5a" stroke-width="1.4"/></svg>
<span style="position:absolute;left:413.00px;top:823.00px;font-size:16.48px;line-height:1;letter-spacing:0.572px;color:#666;white-space:pre;">Eliminar</span>
<svg style="position:absolute;left:506px;top:816px;" width="25" height="28" viewBox="0 0 25 28"><rect x="5" y="1.2" width="15" height="6.5" rx="0.8" fill="none" stroke="#5a5a5a" stroke-width="1.9"/><path d="M5,19.5 H3 A1.5,1.5 0 0 1 1.5,18 V9.5 A1.5,1.5 0 0 1 3,8 H22 A1.5,1.5 0 0 1 23.5,9.5 V18 A1.5,1.5 0 0 1 22,19.5 H20" fill="none" stroke="#5a5a5a" stroke-width="1.9"/><rect x="4.5" y="16.5" width="16" height="10" rx="0.8" fill="none" stroke="#5a5a5a" stroke-width="1.9"/><path d="M7,20 H18 M7,23 H18" stroke="#5a5a5a" stroke-width="1.2"/><circle cx="19.5" cy="11.2" r="0.9" fill="#5a5a5a"/></svg>
<span style="position:absolute;left:537.00px;top:823.00px;font-size:16.48px;line-height:1;letter-spacing:1.218px;color:#666;white-space:pre;">Imprimir</span>
<svg style="position:absolute;left:618px;top:819px;" width="25" height="22" viewBox="0 0 25 22"><path d="M1.5,10 L12.5,2.5 L23.5,10 M1.5,19.5 L12.5,12 L23.5,19.5" fill="none" stroke="#5a5a5a" stroke-width="2.8"/></svg>
<svg style="position:absolute;left:664px;top:815px;" width="29" height="29" viewBox="0 0 29 29"><circle cx="14.5" cy="14.5" r="11.8" fill="none" stroke="#2a2a2a" stroke-width="2.5"/><path d="M10.6,11.4 C10.6,8.9 12.4,7.5 14.6,7.5 C17,7.5 18.6,9 18.6,11 C18.6,13.7 15.1,14 15.1,16.9 V17.6" fill="none" stroke="#2a2a2a" stroke-width="2.8"/><rect x="13.5" y="19.6" width="3.2" height="3.2" fill="#2a2a2a"/></svg>
<svg style="position:absolute;left:714px;top:819px;" width="27" height="21" viewBox="0 0 27 21"><polyline points="2,11 8.5,17.5 24.5,2" fill="none" stroke="#2a2a2a" stroke-width="2.6"/></svg>
<span style="position:absolute;left:746.00px;top:823.00px;font-size:16.48px;line-height:1;letter-spacing:0.455px;color:#333;white-space:pre;">Aceptar</span>
<svg style="position:absolute;left:839px;top:818px;" width="24" height="24" viewBox="0 0 24 24"><path d="M3,3 L21,21 M21,3 L3,21" stroke="#2a2a2a" stroke-width="2.5"/></svg>
<span style="position:absolute;left:870.00px;top:823.00px;font-size:16.48px;line-height:1;letter-spacing:0.154px;color:#333;white-space:pre;">Cancelar</span>
</body></html>
